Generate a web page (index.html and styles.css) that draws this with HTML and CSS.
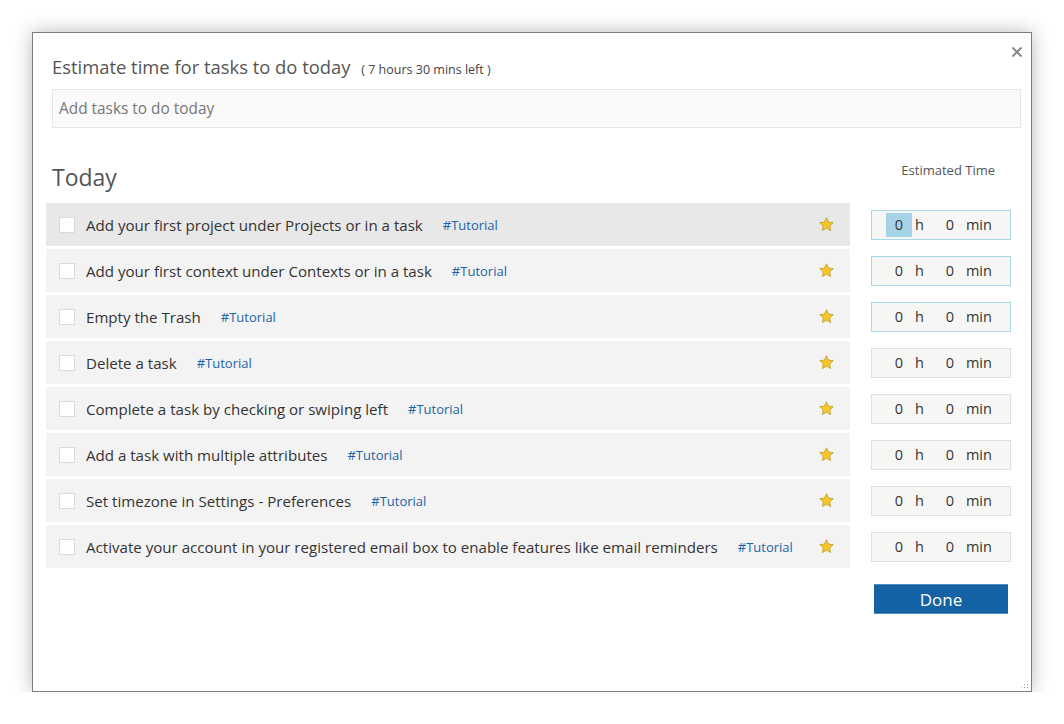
FILE: index.html
```html
<!DOCTYPE html>
<html>
  <head>
    <meta charset="utf-8" />
    <title>Estimate time</title>
    <link rel="stylesheet" href="styles.css">
  </head>
  <body>
    <div class="dialog">
      <span class="close">
        <svg width="12" height="12" viewBox="0 0 12 12"><path d="M1.5 1.5L10.5 10.5M10.5 1.5L1.5 10.5" stroke="#8a8a8a" stroke-width="2" /></svg>
      </span>
      <h1 class="title">Estimate time for tasks to do today <small>( 7 hours 30 mins left )</small></h1>
      <input class="addtask" type="text" placeholder="Add tasks to do today" />

      <div class="list">
        <h2 class="today">Today</h2>
        <div class="esthead">Estimated Time</div>

        <div class="task hover"><span class="check"></span><span class="name">Add your first project under Projects or in a task</span><span class="tag">#Tutorial</span><span class="star"><svg width="17" height="17" viewBox="0 0 24 24"><path d="M12 2.5l2.9 6.1 6.6.8-4.9 4.6 1.3 6.6L12 17.3l-5.9 3.3 1.3-6.6-4.9-4.6 6.6-.8z" fill="#f7c726" stroke="#b8912a" stroke-width="1" stroke-linejoin="round" /></svg></span></div>
        <div class="time focus"><span class="field sel">0</span><span class="unit">h</span><span class="field min">0</span><span class="unit">min</span></div>

        <div class="task"><span class="check"></span><span class="name">Add your first context under Contexts or in a task</span><span class="tag">#Tutorial</span><span class="star"><svg width="17" height="17" viewBox="0 0 24 24"><path d="M12 2.5l2.9 6.1 6.6.8-4.9 4.6 1.3 6.6L12 17.3l-5.9 3.3 1.3-6.6-4.9-4.6 6.6-.8z" fill="#f7c726" stroke="#b8912a" stroke-width="1" stroke-linejoin="round" /></svg></span></div>
        <div class="time focus"><span class="field">0</span><span class="unit">h</span><span class="field min">0</span><span class="unit">min</span></div>

        <div class="task"><span class="check"></span><span class="name">Empty the Trash</span><span class="tag">#Tutorial</span><span class="star"><svg width="17" height="17" viewBox="0 0 24 24"><path d="M12 2.5l2.9 6.1 6.6.8-4.9 4.6 1.3 6.6L12 17.3l-5.9 3.3 1.3-6.6-4.9-4.6 6.6-.8z" fill="#f7c726" stroke="#b8912a" stroke-width="1" stroke-linejoin="round" /></svg></span></div>
        <div class="time focus"><span class="field">0</span><span class="unit">h</span><span class="field min">0</span><span class="unit">min</span></div>

        <div class="task"><span class="check"></span><span class="name">Delete a task</span><span class="tag">#Tutorial</span><span class="star"><svg width="17" height="17" viewBox="0 0 24 24"><path d="M12 2.5l2.9 6.1 6.6.8-4.9 4.6 1.3 6.6L12 17.3l-5.9 3.3 1.3-6.6-4.9-4.6 6.6-.8z" fill="#f7c726" stroke="#b8912a" stroke-width="1" stroke-linejoin="round" /></svg></span></div>
        <div class="time"><span class="field">0</span><span class="unit">h</span><span class="field min">0</span><span class="unit">min</span></div>

        <div class="task"><span class="check"></span><span class="name">Complete a task by checking or swiping left</span><span class="tag">#Tutorial</span><span class="star"><svg width="17" height="17" viewBox="0 0 24 24"><path d="M12 2.5l2.9 6.1 6.6.8-4.9 4.6 1.3 6.6L12 17.3l-5.9 3.3 1.3-6.6-4.9-4.6 6.6-.8z" fill="#f7c726" stroke="#b8912a" stroke-width="1" stroke-linejoin="round" /></svg></span></div>
        <div class="time"><span class="field">0</span><span class="unit">h</span><span class="field min">0</span><span class="unit">min</span></div>

        <div class="task"><span class="check"></span><span class="name">Add a task with multiple attributes</span><span class="tag">#Tutorial</span><span class="star"><svg width="17" height="17" viewBox="0 0 24 24"><path d="M12 2.5l2.9 6.1 6.6.8-4.9 4.6 1.3 6.6L12 17.3l-5.9 3.3 1.3-6.6-4.9-4.6 6.6-.8z" fill="#f7c726" stroke="#b8912a" stroke-width="1" stroke-linejoin="round" /></svg></span></div>
        <div class="time"><span class="field">0</span><span class="unit">h</span><span class="field min">0</span><span class="unit">min</span></div>

        <div class="task"><span class="check"></span><span class="name">Set timezone in Settings - Preferences</span><span class="tag">#Tutorial</span><span class="star"><svg width="17" height="17" viewBox="0 0 24 24"><path d="M12 2.5l2.9 6.1 6.6.8-4.9 4.6 1.3 6.6L12 17.3l-5.9 3.3 1.3-6.6-4.9-4.6 6.6-.8z" fill="#f7c726" stroke="#b8912a" stroke-width="1" stroke-linejoin="round" /></svg></span></div>
        <div class="time"><span class="field">0</span><span class="unit">h</span><span class="field min">0</span><span class="unit">min</span></div>

        <div class="task"><span class="check"></span><span class="name">Activate your account in your registered email box to enable features like email reminders</span><span class="tag">#Tutorial</span><span class="star"><svg width="17" height="17" viewBox="0 0 24 24"><path d="M12 2.5l2.9 6.1 6.6.8-4.9 4.6 1.3 6.6L12 17.3l-5.9 3.3 1.3-6.6-4.9-4.6 6.6-.8z" fill="#f7c726" stroke="#b8912a" stroke-width="1" stroke-linejoin="round" /></svg></span></div>
        <div class="time"><span class="field">0</span><span class="unit">h</span><span class="field min">0</span><span class="unit">min</span></div>

        <button class="done">Done</button>
      </div>

      <span class="grip"></span>
    </div>
  </body>
</html>
```

FILE: styles.css
```css
html,
body {
  margin: 0;
  background: #ffffff;
  font-family: "Segoe UI", "Open Sans", sans-serif;
  color: #333333;
}

.dialog {
  position: relative;
  box-sizing: border-box;
  width: 1000px;
  height: 660px;
  margin: 32px 0 0 32px;
  padding: 20px 0 0 13px;
  border: 1px solid #7c7c7c;
  background: #ffffff;
  box-shadow: 0 0 18px rgba(0, 0, 0, 0.28);
}

.close {
  position: absolute;
  top: 8px;
  right: 8px;
  width: 12px;
  height: 12px;
}

.title {
  margin: 0 0 8px 6px;
  font-size: 18.4px;
  font-weight: 400;
  line-height: 28px;
  color: #555555;
}

.title small {
  margin-left: 6px;
  font-size: 12.5px;
  line-height: 20px;
  color: #444444;
}

.addtask {
  display: block;
  box-sizing: border-box;
  width: 969px;
  height: 39px;
  margin-left: 6px;
  padding: 0 6px;
  border: 1px solid #e6e6e6;
  background: #fafafa;
  font-family: inherit;
  font-size: 15.4px;
  color: #333333;
  outline: none;
}

.addtask::placeholder {
  color: #777777;
}

.list {
  display: grid;
  grid-template-columns: 804px 140px;
  column-gap: 21px;
  row-gap: 3px;
  align-items: center;
  margin-top: 33px;
}

.today {
  margin: 0 0 7px 6px;
  font-size: 23px;
  font-weight: 400;
  line-height: 32px;
  color: #555555;
}

.esthead {
  align-self: start;
  padding-right: 16px;
  text-align: right;
  font-size: 13px;
  line-height: 18px;
  color: #555555;
}

.task {
  display: flex;
  align-items: center;
  height: 43px;
  padding: 0 15px 0 13px;
  background: #f3f3f3;
  font-size: 15.1px;
}

.task.hover {
  background: #e8e8e8;
}

.check {
  box-sizing: border-box;
  width: 16px;
  height: 16px;
  margin-right: 11px;
  border: 1px solid #dadada;
  background: #ffffff;
}

.tag {
  margin-left: 20px;
  font-size: 13px;
  color: #1d63a6;
}

.star {
  display: flex;
  margin-left: auto;
}

.time {
  display: flex;
  align-items: center;
  box-sizing: border-box;
  height: 30px;
  padding-left: 14px;
  border: 1px solid #dedede;
  background: #f6f7f4;
  font-size: 14.5px;
}

.time.focus {
  border-color: #a9d8ec;
}

.field {
  width: 26px;
  line-height: 24px;
  text-align: center;
}

.field.sel {
  background: #a7d3e8;
}

.field.min {
  margin-left: 13px;
}

.unit {
  margin-left: 3px;
}

.done {
  grid-column: 2;
  justify-self: center;
  width: 134px;
  height: 30px;
  margin-top: 13px;
  border: 0;
  border-top: 1px solid #4f8cc2;
  border-bottom: 1px solid #4f8cc2;
  background: #1462a3;
  font-family: inherit;
  font-size: 17px;
  color: #ffffff;
}

.grip {
  position: absolute;
  right: 2px;
  bottom: 2px;
  width: 9px;
  height: 9px;
  background: radial-gradient(circle, #9a9a9a 0.8px, transparent 1px) 0 0 / 3px 3px;
  clip-path: polygon(100% 0, 100% 100%, 0 100%);
}
```
